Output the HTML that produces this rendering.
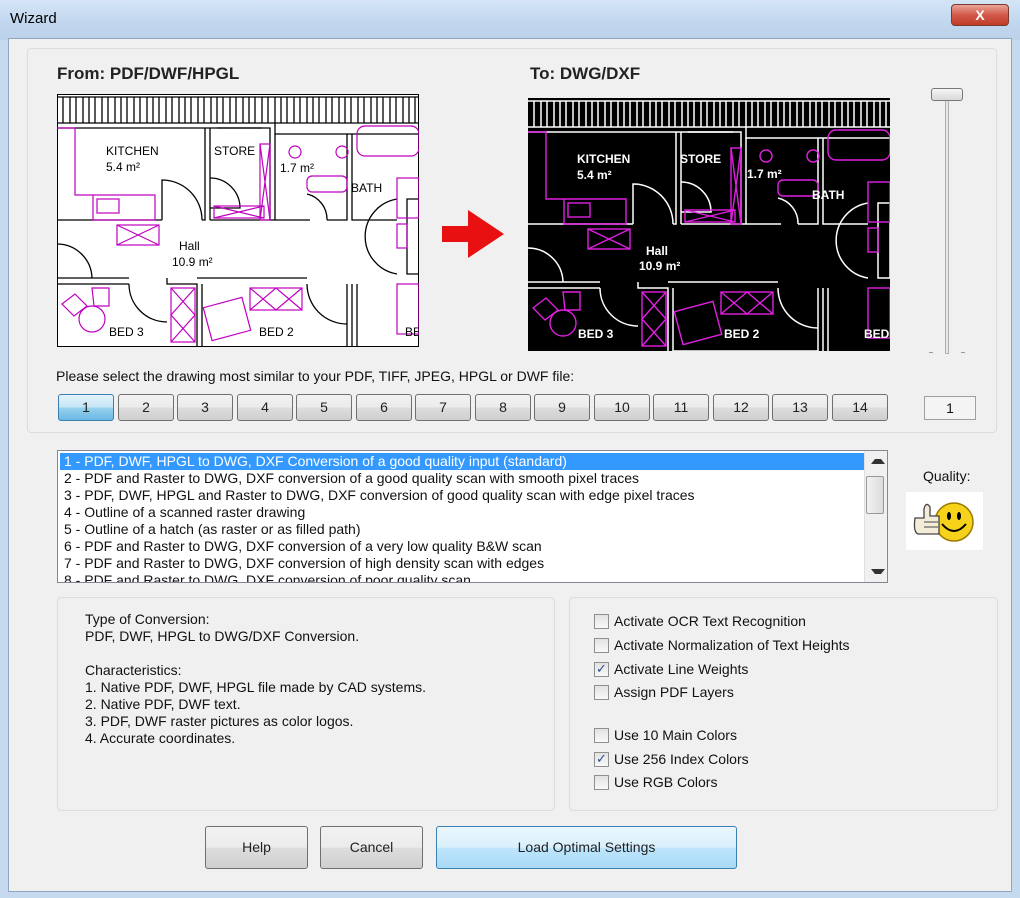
<!DOCTYPE html>
<html><head><meta charset="utf-8"><style>
*{margin:0;padding:0;box-sizing:border-box}
body{width:1020px;height:898px;overflow:hidden;background:#c6daef;font-family:"Liberation Sans",sans-serif;font-size:13.5px;color:#111;position:relative}
.abs{position:absolute}
.title{left:0;top:0;width:1020px;height:40px;background:linear-gradient(#d5e5f6,#c0d6ee 60%,#bcd2ea)}
.client{left:8px;top:38px;width:1004px;height:854px;background:#f0f0f0;border:1px solid #8ea6c0}
.grp{border:1px solid #dcdcdc;border-radius:4px;background:#f0f0f0}
.btn{position:absolute;border:1px solid #707070;border-radius:3px;background:linear-gradient(#f2f2f2,#ebebeb 50%,#dddddd 51%,#cfcfcf);text-align:center;font-size:14px;color:#222}
.btn.sel{background:linear-gradient(#e4f3fc,#c4e5f6 50%,#98d1ef 51%,#6ab8e2);border-color:#3c7fb1}
.list div{height:17px;line-height:17px;padding-left:6px;white-space:nowrap;font-size:14px}
.cb{position:absolute;left:24px;width:15px;height:15px;border:1px solid #8f8f8f;background:linear-gradient(#e2e2e2,#f8f8f8)}
.cbl{position:absolute;left:44px;font-size:14px}
</style></head><body>
<div class="abs title"></div>
<div class="abs" style="left:10px;top:10px;font-size:15px;color:#000">Wizard</div>
<div class="abs" style="left:951px;top:4px;width:58px;height:22px;border:1px solid #7a3a2e;border-radius:4px;background:linear-gradient(#e9a597,#d2584a 50%,#c13a28);color:#fff;font-weight:bold;text-align:center;line-height:20px;font-size:14px">X</div>
<div class="abs client"></div>
<div class="abs grp" style="left:27px;top:48px;width:970px;height:385px"></div>
<div class="abs" style="left:57px;top:64px;font-size:17px;font-weight:bold;color:#222">From: PDF/DWF/HPGL</div>
<div class="abs" style="left:530px;top:64px;font-size:17px;font-weight:bold;color:#222">To: DWG/DXF</div>

<svg class="abs" style="left:57px;top:94px" width="362" height="253" viewBox="0 0 362 253">
<rect x="0" y="0" width="362" height="253" fill="#fff" stroke="#000" stroke-width="2"/>
<g stroke="#000" stroke-width="1.3" fill="none">
<path d="M0 3H362M0 29H362M0 34H205M218 29V40H362"/>
<path d="M6 3V29M13 3V29M19 3V29M26 3V29M32 3V29M38 3V29M45 3V29M51 3V29M58 3V29M64 3V29M70 3V29M77 3V29M83 3V29M90 3V29M96 3V29M102 3V29M109 3V29M115 3V29M122 3V29M128 3V29M134 3V29M141 3V29M147 3V29M154 3V29M160 3V29M166 3V29M173 3V29M179 3V29M186 3V29M192 3V29M198 3V29M205 3V29M211 3V29M218 3V29M224 3V29M230 3V29M237 3V29M243 3V29M250 3V29M256 3V29M262 3V29M269 3V29M275 3V29M282 3V29M288 3V29M294 3V29M301 3V29M307 3V29M314 3V29M320 3V29M326 3V29M333 3V29M339 3V29M346 3V29M352 3V29M358 3V29"/>
<path d="M0 126H105M145 126H148V34M153 126V34M153 126H253M160 34H213V126M218 40V126H250M270 126H290V40M295 40V126H340M0 184H72M110 184V190H140V253M145 190V253H290V190M295 190V253M300 190V253M0 190H72M140 184H250"/>
<path d="M145 126A40 40 0 0 0 105 86V126M153 84A30 30 0 0 1 183 114H153M250 100A26 26 0 0 1 270 126M0 150A35 35 0 0 1 35 184M72 190A38 38 0 0 0 110 228M250 190A40 40 0 0 0 290 230M340 105A38 38 0 0 0 340 180"/>
<path d="M350 105H362V180H350Z"/>
</g>
<g stroke="#c000c0" stroke-width="1.2" fill="none">
<path d="M0 34H18V101H98V126H36V101"/><rect x="40" y="105" width="22" height="14"/>
<rect x="60" y="131" width="42" height="20"/><path d="M60 131L102 151M102 131L60 151"/>
<rect x="203" y="50" width="10" height="76"/><path d="M203 50L213 126M213 50L203 126"/>
<rect x="157" y="112" width="50" height="12"/><path d="M157 112L207 124M207 112L157 124"/>
<circle cx="238" cy="58" r="6"/><circle cx="285" cy="58" r="6"/>
<rect x="300" y="32" width="62" height="30" rx="8"/><rect x="250" y="82" width="40" height="16" rx="5"/>
<rect x="340" y="84" width="22" height="40"/><rect x="340" y="130" width="10" height="24"/>
<rect x="114" y="194" width="24" height="54"/><path d="M114 194L138 221L114 248M138 194L114 221L138 248"/>
<rect x="193" y="194" width="52" height="22"/><path d="M193 194L219 216L245 194M193 216L219 194L245 216"/>
<rect x="150" y="208" width="40" height="34" transform="rotate(-15 170 225)"/>
<path d="M35 194H52V212H37ZM5 210L18 200L30 212L17 222Z"/><circle cx="35" cy="225" r="13"/>
<rect x="340" y="190" width="22" height="50"/>
</g>
<g font-size="12" fill="#000" font-family="Liberation Sans,sans-serif">
<text x="49" y="61">KITCHEN</text><text x="49" y="77">5.4 m²</text>
<text x="157" y="61">STORE</text><text x="223" y="78">1.7 m²</text>
<text x="294" y="98">BATH</text><text x="122" y="156">Hall</text><text x="115" y="172">10.9 m²</text>
<text x="52" y="242">BED 3</text><text x="202" y="242">BED 2</text><text x="348" y="242">BE</text>
</g></svg>

<svg class="abs" style="left:442px;top:210px" width="62" height="48" viewBox="0 0 62 48"><path d="M0 16H26V0L62 24L26 48V32H0Z" fill="#e81010"/></svg>

<svg class="abs" style="left:528px;top:98px" width="362" height="253" viewBox="0 0 362 253">
<rect x="0" y="0" width="362" height="253" fill="#000"/>
<g stroke="#fff" stroke-width="1.5" fill="none">
<path d="M0 3H362M0 29H362M0 34H205M218 29V40H362"/>
<path d="M6 3V29M13 3V29M19 3V29M26 3V29M32 3V29M38 3V29M45 3V29M51 3V29M58 3V29M64 3V29M70 3V29M77 3V29M83 3V29M90 3V29M96 3V29M102 3V29M109 3V29M115 3V29M122 3V29M128 3V29M134 3V29M141 3V29M147 3V29M154 3V29M160 3V29M166 3V29M173 3V29M179 3V29M186 3V29M192 3V29M198 3V29M205 3V29M211 3V29M218 3V29M224 3V29M230 3V29M237 3V29M243 3V29M250 3V29M256 3V29M262 3V29M269 3V29M275 3V29M282 3V29M288 3V29M294 3V29M301 3V29M307 3V29M314 3V29M320 3V29M326 3V29M333 3V29M339 3V29M346 3V29M352 3V29M358 3V29"/>
<path d="M0 126H105M145 126H148V34M153 126V34M153 126H253M160 34H213V126M218 40V126H250M270 126H290V40M295 40V126H340M0 184H72M110 184V190H140V253M145 190V253H290V190M295 190V253M300 190V253M0 190H72M140 184H250"/>
<path d="M145 126A40 40 0 0 0 105 86V126M153 84A30 30 0 0 1 183 114H153M250 100A26 26 0 0 1 270 126M0 150A35 35 0 0 1 35 184M72 190A38 38 0 0 0 110 228M250 190A40 40 0 0 0 290 230M340 105A38 38 0 0 0 340 180"/>
<path d="M350 105H362V180H350Z"/>
</g>
<g stroke="#e020e0" stroke-width="1.4" fill="none">
<path d="M0 34H18V101H98V126H36V101"/><rect x="40" y="105" width="22" height="14"/>
<rect x="60" y="131" width="42" height="20"/><path d="M60 131L102 151M102 131L60 151"/>
<rect x="203" y="50" width="10" height="76"/><path d="M203 50L213 126M213 50L203 126"/>
<rect x="157" y="112" width="50" height="12"/><path d="M157 112L207 124M207 112L157 124"/>
<circle cx="238" cy="58" r="6"/><circle cx="285" cy="58" r="6"/>
<rect x="300" y="32" width="62" height="30" rx="8"/><rect x="250" y="82" width="40" height="16" rx="5"/>
<rect x="340" y="84" width="22" height="40"/><rect x="340" y="130" width="10" height="24"/>
<rect x="114" y="194" width="24" height="54"/><path d="M114 194L138 221L114 248M138 194L114 221L138 248"/>
<rect x="193" y="194" width="52" height="22"/><path d="M193 194L219 216L245 194M193 216L219 194L245 216"/>
<rect x="150" y="208" width="40" height="34" transform="rotate(-15 170 225)"/>
<path d="M35 194H52V212H37ZM5 210L18 200L30 212L17 222Z"/><circle cx="35" cy="225" r="13"/>
<rect x="340" y="190" width="22" height="50"/>
</g>
<g font-size="12" fill="#fff" font-weight="bold" font-family="Liberation Sans,sans-serif">
<text x="49" y="65">KITCHEN</text><text x="49" y="81">5.4 m²</text>
<text x="152" y="65">STORE</text><text x="219" y="80">1.7 m²</text>
<text x="284" y="101">BATH</text><text x="118" y="157">Hall</text><text x="111" y="172">10.9 m²</text>
<text x="50" y="240">BED 3</text><text x="196" y="240">BED 2</text><text x="336" y="240">BED</text>
</g></svg>

<div class="abs" style="left:945px;top:92px;width:4px;height:262px;border:1px solid #b0b0b0;background:#e6e6e6"></div>
<div class="abs" style="left:931px;top:88px;width:32px;height:13px;border:1px solid #777;border-radius:3px;background:linear-gradient(#f6f6f6,#d8d8d8)"></div>
<div class="abs" style="left:929px;top:352px;width:4px;height:1px;background:#999"></div>
<div class="abs" style="left:961px;top:352px;width:4px;height:1px;background:#999"></div>

<div class="abs" style="left:56px;top:368px;font-size:14px">Please select the drawing most similar to your PDF, TIFF, JPEG, HPGL or DWF file:</div>
<div class="btn sel" style="left:58px;top:394px;width:56px;height:27px;line-height:25px">1</div>
<div class="btn" style="left:118px;top:394px;width:56px;height:27px;line-height:25px">2</div>
<div class="btn" style="left:177px;top:394px;width:56px;height:27px;line-height:25px">3</div>
<div class="btn" style="left:237px;top:394px;width:56px;height:27px;line-height:25px">4</div>
<div class="btn" style="left:296px;top:394px;width:56px;height:27px;line-height:25px">5</div>
<div class="btn" style="left:356px;top:394px;width:56px;height:27px;line-height:25px">6</div>
<div class="btn" style="left:415px;top:394px;width:56px;height:27px;line-height:25px">7</div>
<div class="btn" style="left:475px;top:394px;width:56px;height:27px;line-height:25px">8</div>
<div class="btn" style="left:534px;top:394px;width:56px;height:27px;line-height:25px">9</div>
<div class="btn" style="left:594px;top:394px;width:56px;height:27px;line-height:25px">10</div>
<div class="btn" style="left:653px;top:394px;width:56px;height:27px;line-height:25px">11</div>
<div class="btn" style="left:713px;top:394px;width:56px;height:27px;line-height:25px">12</div>
<div class="btn" style="left:772px;top:394px;width:56px;height:27px;line-height:25px">13</div>
<div class="btn" style="left:832px;top:394px;width:56px;height:27px;line-height:25px">14</div>
<div class="abs" style="left:924px;top:396px;width:52px;height:24px;border:1px solid #a0a0a0;background:#f4f4f4;text-align:center;line-height:22px;font-size:14px">1</div>

<div class="abs list" style="left:57px;top:450px;width:831px;height:133px;border:1px solid #828790;background:#fff;overflow:hidden;padding-top:2px">
<div style="background:#3399ff;color:#fff;width:806px;margin-left:2px;padding-left:4px">1 - PDF, DWF, HPGL to DWG, DXF Conversion of a good quality input (standard)</div>
<div>2 - PDF and Raster to DWG, DXF conversion of a good quality scan with smooth pixel traces</div>
<div>3 - PDF, DWF, HPGL and Raster to DWG, DXF conversion of good quality scan with edge pixel traces</div>
<div>4 - Outline of a scanned raster drawing</div>
<div>5 - Outline of a hatch (as raster or as filled path)</div>
<div>6 - PDF and Raster to DWG, DXF conversion of a very low quality B&amp;W scan</div>
<div>7 - PDF and Raster to DWG, DXF conversion of high density scan with edges</div>
<div>8 - PDF and Raster to DWG, DXF conversion of poor quality scan</div>
<div class="abs" style="left:806px;top:0;width:23px;height:131px;background:#f0f0f0;border-left:1px solid #e0e0e0"></div>
<div class="abs" style="left:813px;top:8px;width:0;height:0;border:4px solid transparent;border-bottom:5px solid #333;border-top:0"></div>
<div class="abs" style="left:813px;top:118px;width:0;height:0;border:4px solid transparent;border-top:5px solid #333;border-bottom:0"></div>
<div class="abs" style="left:808px;top:25px;width:18px;height:38px;border:1px solid #999;border-radius:2px;background:linear-gradient(90deg,#f2f2f2,#dcdcdc)"></div>
</div>

<div class="abs" style="left:923px;top:468px;font-size:14px">Quality:</div>
<div class="abs" style="left:906px;top:492px;width:77px;height:58px;background:#fff"></div>
<svg class="abs" style="left:906px;top:492px" width="77" height="58" viewBox="0 0 77 58">
<circle cx="48" cy="30" r="19" fill="#f7d21a" stroke="#9a7a00" stroke-width="1.5"/>
<ellipse cx="43" cy="24" rx="2" ry="4" fill="#000"/><ellipse cx="53" cy="24" rx="2" ry="4" fill="#000"/>
<path d="M36 32Q48 46 60 32" stroke="#000" stroke-width="2" fill="none"/>
<path d="M9 26H18V17Q20 9 24 15V24H33V42H12Q7 40 9 26Z" fill="#f4ecd8" stroke="#444" stroke-width="1.3"/>
<path d="M18 30H32M18 35H32" stroke="#444"/>
</svg>

<div class="abs grp" style="left:57px;top:597px;width:498px;height:214px"></div>
<div class="abs" style="left:85px;top:611px;font-size:14px;line-height:17px">Type of Conversion:<br>PDF, DWF, HPGL to DWG/DXF Conversion.<br><br>Characteristics:<br>1. Native PDF, DWF, HPGL file made by CAD systems.<br>2. Native PDF, DWF text.<br>3. PDF, DWF raster pictures as color logos.<br>4. Accurate coordinates.</div>

<div class="abs grp" style="left:569px;top:597px;width:429px;height:214px">
<div class="cb" style="top:16px"></div><div class="cbl" style="top:15px">Activate OCR Text Recognition</div>
<div class="cb" style="top:40px"></div><div class="cbl" style="top:39px">Activate Normalization of Text Heights</div>
<div class="cb" style="top:64px;font-size:13px;line-height:12px;color:#2a4a9a;text-align:center">✓</div><div class="cbl" style="top:63px">Activate Line Weights</div>
<div class="cb" style="top:87px"></div><div class="cbl" style="top:86px">Assign PDF Layers</div>
<div class="cb" style="top:130px"></div><div class="cbl" style="top:129px">Use 10 Main Colors</div>
<div class="cb" style="top:154px;font-size:13px;line-height:12px;color:#2a4a9a;text-align:center">✓</div><div class="cbl" style="top:153px">Use 256 Index Colors</div>
<div class="cb" style="top:177px"></div><div class="cbl" style="top:176px">Use RGB Colors</div>
</div>

<div class="btn" style="left:205px;top:826px;width:103px;height:43px;line-height:41px">Help</div>
<div class="btn" style="left:320px;top:826px;width:103px;height:43px;line-height:41px">Cancel</div>
<div class="btn sel" style="left:436px;top:826px;width:301px;height:43px;line-height:41px;background:linear-gradient(#eaf6fd,#d9f0fc 50%,#bee6fd 51%,#a7d9f5)">Load Optimal Settings</div>
</body></html>
